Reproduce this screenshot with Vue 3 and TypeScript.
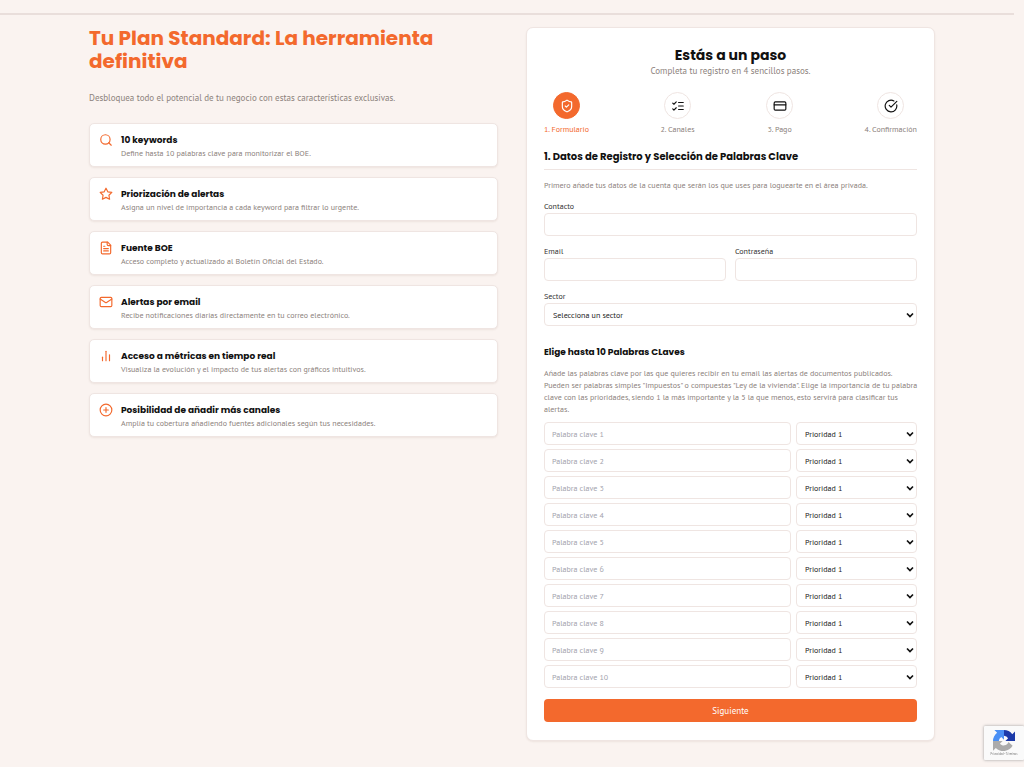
<script setup lang="ts">
import { ref } from 'vue'

interface Feature {
  icon: string
  title: string
  text: string
}

interface Step {
  icon: string
  label: string
}

const icons: Record<string, string[]> = {
  search: ['M11 3a8 8 0 1 0 0 16a8 8 0 1 0 0-16', 'M21 21l-4.3-4.3'],
  star: ['M12 2l3.09 6.26L22 9.27l-5 4.87 1.18 6.88L12 17.77l-6.18 3.25L7 14.14 2 9.27l6.91-1.01L12 2z'],
  file: [
    'M15 2H6a2 2 0 0 0-2 2v16a2 2 0 0 0 2 2h12a2 2 0 0 0 2-2V7z',
    'M14 2v4a2 2 0 0 0 2 2h4',
    'M10 9H8',
    'M16 13H8',
    'M16 17H8',
  ],
  mail: ['M4 4h16a2 2 0 0 1 2 2v12a2 2 0 0 1-2 2H4a2 2 0 0 1-2-2V6a2 2 0 0 1 2-2z', 'M22 7l-8.97 5.7a1.94 1.94 0 0 1-2.06 0L2 7'],
  chart: ['M6 20v-6', 'M12 20V4', 'M18 20V10'],
  plus: ['M12 2a10 10 0 1 0 0 20a10 10 0 1 0 0-20', 'M8 12h8', 'M12 8v8'],
  shield: [
    'M20 13c0 5-3.5 7.5-7.66 8.95a1 1 0 0 1-.67-.01C7.5 20.5 4 18 4 13V6a1 1 0 0 1 1-1c2 0 4.500-1.200 6.240-2.720a1.170 1.170 0 0 1 1.520 0C14.510 3.810 17 5 19 5a1 1 0 0 1 1 1z',
    'M9 12l2 2 4-4',
  ],
  list: ['M3 17l2 2 4-4', 'M3 7l2 2 4-4', 'M13 6h8', 'M13 12h8', 'M13 18h8'],
  card: ['M4 5h16a2 2 0 0 1 2 2v10a2 2 0 0 1-2 2H4a2 2 0 0 1-2-2V7a2 2 0 0 1 2-2z', 'M2 10h20'],
  done: ['M21.8 10A10 10 0 1 1 17 3.34', 'M9 11l3 3L22 4'],
}

const features: Feature[] = [
  { icon: 'search', title: '10 keywords', text: 'Define hasta 10 palabras clave para monitorizar el BOE.' },
  { icon: 'star', title: 'Priorización de alertas', text: 'Asigna un nivel de importancia a cada keyword para filtrar lo urgente.' },
  { icon: 'file', title: 'Fuente BOE', text: 'Acceso completo y actualizado al Boletín Oficial del Estado.' },
  { icon: 'mail', title: 'Alertas por email', text: 'Recibe notificaciones diarias directamente en tu correo electrónico.' },
  { icon: 'chart', title: 'Acceso a métricas en tiempo real', text: 'Visualiza la evolución y el impacto de tus alertas con gráficos intuitivos.' },
  { icon: 'plus', title: 'Posibilidad de añadir más canales', text: 'Amplía tu cobertura añadiendo fuentes adicionales según tus necesidades.' },
]

const steps: Step[] = [
  { icon: 'shield', label: '1. Formulario' },
  { icon: 'list', label: '2. Canales' },
  { icon: 'card', label: '3. Pago' },
  { icon: 'done', label: '4. Confirmación' },
]

const currentStep = ref(0)
const contact = ref('')
const email = ref('')
const password = ref('')
const sector = ref('')
const keywords = ref(Array.from({ length: 10 }, () => ({ word: '', priority: 1 })))
</script>

<template>
  <div class="page">
    <header class="topbar"></header>
    <main class="layout">
      <section class="plan">
        <h1>Tu Plan Standard: La herramienta definitiva</h1>
        <p class="lead">Desbloquea todo el potencial de tu negocio con estas características exclusivas.</p>
        <ul class="features">
          <li v-for="f in features" :key="f.title" class="feature">
            <svg class="feature-icon" viewBox="0 0 24 24" aria-hidden="true">
              <path v-for="d in icons[f.icon]" :key="d" :d="d" />
            </svg>
            <div>
              <h3>{{ f.title }}</h3>
              <p>{{ f.text }}</p>
            </div>
          </li>
        </ul>
      </section>

      <form class="panel" @submit.prevent>
        <h2>Estás a un paso</h2>
        <p class="subtitle">Completa tu registro en 4 sencillos pasos.</p>

        <ol class="steps">
          <li v-for="(s, i) in steps" :key="s.label" :class="['step', { active: i === currentStep }]">
            <span class="bubble">
              <svg viewBox="0 0 24 24" aria-hidden="true">
                <path v-for="d in icons[s.icon]" :key="d" :d="d" />
              </svg>
            </span>
            <span class="step-label">{{ s.label }}</span>
          </li>
        </ol>

        <h3 class="section-title">1. Datos de Registro y Selección de Palabras Clave</h3>
        <p class="note">Primero añade tus datos de la cuenta que serán los que uses para loguearte en el área privada.</p>

        <div class="fields">
          <div class="field wide">
            <label for="contact">Contacto</label>
            <input id="contact" v-model="contact" type="text" />
          </div>
          <div class="field">
            <label for="email">Email</label>
            <input id="email" v-model="email" type="email" />
          </div>
          <div class="field">
            <label for="password">Contraseña</label>
            <input id="password" v-model="password" type="password" />
          </div>
          <div class="field wide">
            <label for="sector">Sector</label>
            <select id="sector" v-model="sector">
              <option value="">Selecciona un sector</option>
            </select>
          </div>
        </div>

        <h4>Elige hasta 10 Palabras CLaves</h4>
        <p class="note help">
          Añade las palabras clave por las que quieres recibir en tu email las alertas de documentos publicados.<br />
          Pueden ser palabras simples "Impuestos" o compuestas "Ley de la vivienda". Elige la importancia de tu palabra
          clave con las prioridades, siendo 1 la más importante y la 5 la que menos, esto servirá para clasificar tus
          alertas.
        </p>

        <div class="keywords">
          <div v-for="(k, i) in keywords" :key="i" class="keyword">
            <input v-model="k.word" type="text" :placeholder="`Palabra clave ${i + 1}`" :aria-label="`Palabra clave ${i + 1}`" />
            <select v-model="k.priority" :aria-label="`Prioridad de la palabra clave ${i + 1}`">
              <option v-for="n in 5" :key="n" :value="n">Prioridad {{ n }}</option>
            </select>
          </div>
        </div>

        <button type="submit">Siguiente</button>
      </form>
    </main>

    <aside class="captcha">
      <svg viewBox="0 0 64 64" aria-hidden="true">
        <path fill="#1c3aa9" d="M64 32V4l-8 8A31 31 0 0 0 32 0v17a15 15 0 0 1 12 7l-8 8z" />
        <path fill="#4a90f5" d="M32 0H4l8 8A31 31 0 0 0 0 32h17a15 15 0 0 1 7-12l8 8z" />
        <path fill="#ababab" d="M0 32v28l8-8a31 31 0 0 0 49-6L45 35a15 15 0 0 1-25 5l8-8z" />
      </svg>
      <p>Privacidad - Términos</p>
    </aside>
  </div>
</template>

<style>
body {
  margin: 0;
  background: #fff;
}
</style>

<style scoped>
.page {
  --orange: #f3692d;
  --line: #efe5e2;
  --ink: #111;
  --muted: #8c827c;
  --display: Poppins, Inter, "Open Sans", sans-serif;
  background: #faf3f0;
  color: var(--ink);
  font-family: "PT Sans", "Noto Sans", sans-serif;
  font-size: 8px;
  line-height: 12px;
}

h1,
h2,
h3,
h4,
p,
ul,
ol {
  margin: 0;
  padding: 0;
}

ul,
ol {
  list-style: none;
}

svg {
  display: block;
  fill: none;
  stroke: currentColor;
  stroke-width: 2;
  stroke-linecap: round;
  stroke-linejoin: round;
}

.topbar {
  box-sizing: border-box;
  height: 15px;
  margin-right: 10px;
  border-bottom: 2px solid #e9dedb;
}

.layout {
  display: grid;
  grid-template-columns: 1fr 1fr;
  gap: 28px;
  align-items: start;
  max-width: 846px;
  margin: 0 auto;
  padding: 12px 16px 26px;
}

h1 {
  color: var(--orange);
  font: 700 20px/23px var(--display);
}

.lead {
  margin: 18px 0;
  color: var(--muted);
  font-size: 9px;
  line-height: 14px;
}

.features {
  display: grid;
  gap: 10px;
}

.feature {
  display: flex;
  gap: 8px;
  padding: 9px 9px 7px;
  border: 1px solid var(--line);
  border-radius: 5px;
  background: #fff;
  box-shadow: 0 1px 2px rgb(90 50 30 / 8%);
}

.feature-icon {
  width: 14px;
  height: 14px;
  color: var(--orange);
}

.feature h3 {
  font: 700 9px/14px var(--display);
}

.feature p {
  color: var(--muted);
}

.panel {
  padding: 18px 17px;
  border: 1px solid var(--line);
  border-radius: 7px;
  background: #fff;
  box-shadow: 0 1px 2px rgb(90 50 30 / 8%);
}

h2 {
  font: 700 14px/18px var(--display);
  text-align: center;
}

.subtitle {
  color: var(--muted);
  font-size: 9px;
  line-height: 14px;
  text-align: center;
}

.steps {
  display: flex;
  justify-content: space-between;
  margin: 14px 0;
}

.step {
  display: flex;
  flex-direction: column;
  align-items: center;
  gap: 4px;
  color: var(--muted);
}

.bubble {
  display: grid;
  place-items: center;
  box-sizing: border-box;
  width: 27px;
  height: 27px;
  border: 1px solid var(--line);
  border-radius: 50%;
  color: var(--ink);
}

.bubble svg {
  width: 14px;
  height: 14px;
}

.active {
  color: var(--orange);
}

.active .bubble {
  border-color: var(--orange);
  background: var(--orange);
  color: #fff;
}

.section-title {
  padding-bottom: 5px;
  border-bottom: 1px solid var(--line);
  font: 700 10px/15px var(--display);
}

.note {
  margin-top: 9px;
  color: var(--muted);
}

.fields {
  display: grid;
  grid-template-columns: 1fr 1fr;
  gap: 9px;
  margin-top: 9px;
}

.field {
  display: grid;
  gap: 1px;
}

.wide {
  grid-column: 1 / -1;
}

label {
  color: #333;
}

input,
select {
  box-sizing: border-box;
  width: 100%;
  height: 23px;
  padding: 0 7px;
  border: 1px solid var(--line);
  border-radius: 4px;
  background: #fff;
  color: #222;
  font: inherit;
}

select {
  appearance: none;
  padding: 0 16px 0 8px;
  background: #fff
    url("data:image/svg+xml,%3Csvg xmlns='http://www.w3.org/2000/svg' viewBox='0 0 8 6'%3E%3Cpath d='M1 1.500l3 3 3-3' fill='none' stroke='%23111' stroke-width='1.700'/%3E%3C/svg%3E")
    no-repeat right 2px center / 8px 6px;
}

input::placeholder {
  color: #a3a3ad;
}

h4 {
  margin-top: 19px;
  font: 700 9px/14px var(--display);
}

.help {
  margin-top: 8px;
  margin-right: -4px;
}

.keywords {
  display: grid;
  gap: 4px;
  margin-top: 7px;
}

.keyword {
  display: grid;
  grid-template-columns: 1fr 121px;
  gap: 5px;
}

button {
  width: 100%;
  height: 23px;
  margin-top: 11px;
  padding: 0;
  border: 0;
  border-radius: 4px;
  background: var(--orange);
  color: #fff;
  font: inherit;
  font-size: 9px;
}

.captcha {
  position: fixed;
  right: 0;
  bottom: 9px;
  display: grid;
  justify-items: center;
  width: 40px;
  padding: 4px 0 3px;
  border-radius: 1px;
  background: #fafafa;
  box-shadow: 0 0 3px #999;
  color: #777;
  font-size: 3px;
  line-height: 5px;
}

.captcha svg {
  width: 22px;
  height: 22px;
  stroke: none;
}
</style>
